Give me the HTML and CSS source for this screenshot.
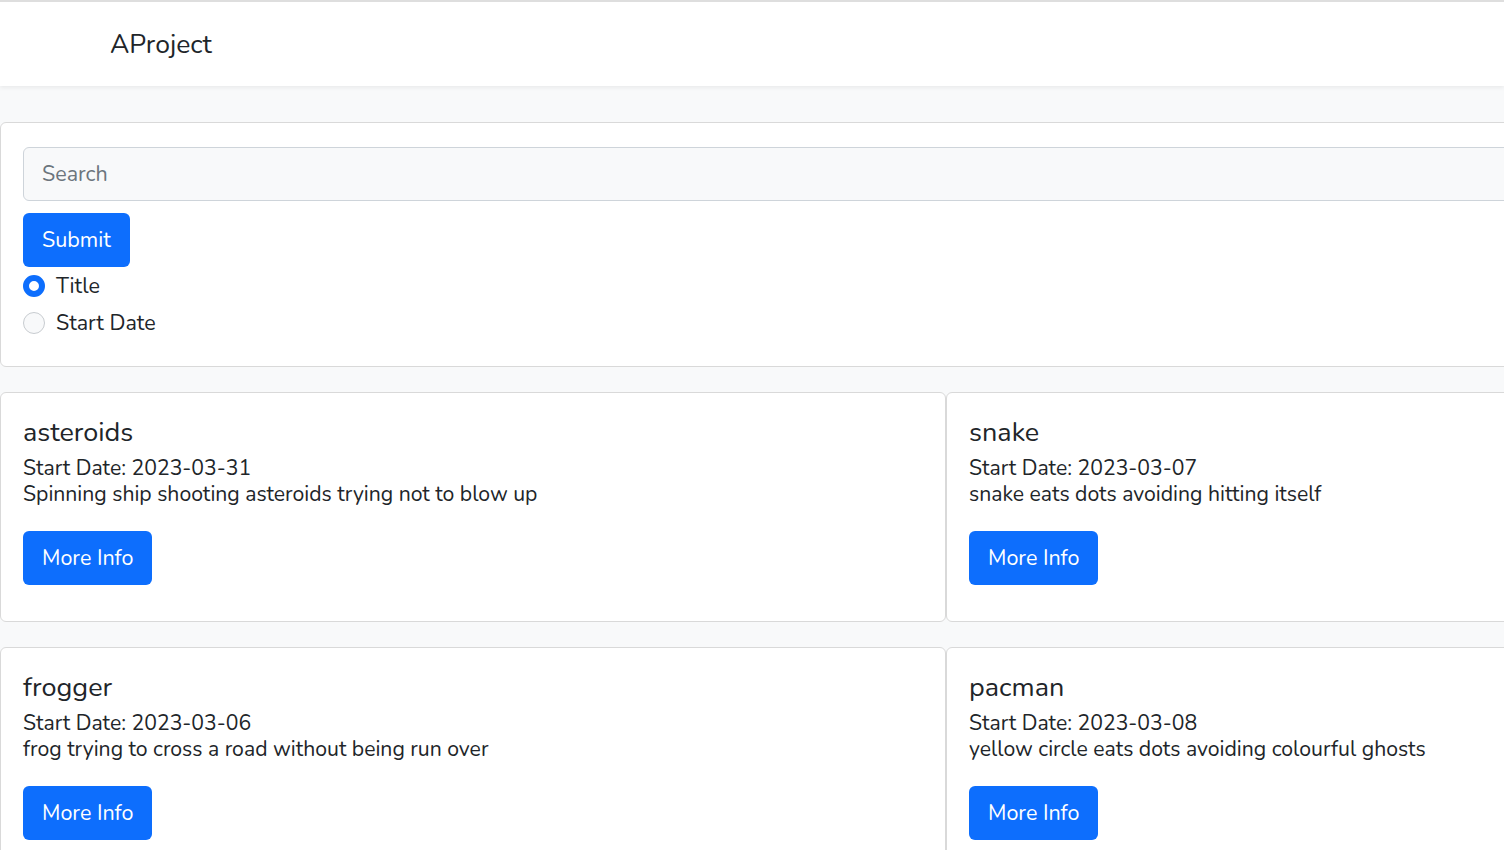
FILE: index.html
```html
<!DOCTYPE html>
<html lang="en">
<head>
<meta charset="utf-8">
<title>AProject</title>
<link rel="stylesheet" href="styles.css">
</head>
<body>
<header class="navbar">
  <a class="brand" href="#">AProject</a>
</header>
<main class="main">
  <section class="search-card">
    <input class="search-input" type="text" placeholder="Search">
    <button class="btn" type="button">Submit</button>
    <label class="radio-row"><span class="radio checked"></span><span>Title</span></label>
    <label class="radio-row"><span class="radio"></span><span>Start Date</span></label>
  </section>
  <section class="grid">
    <article class="card">
      <h5 class="card-title">asteroids</h5>
      <p class="card-text">Start Date: 2023-03-31</p>
      <p class="card-text">Spinning ship shooting asteroids trying not to blow up</p>
      <button class="btn card-btn" type="button">More Info</button>
    </article>
    <article class="card">
      <h5 class="card-title">snake</h5>
      <p class="card-text">Start Date: 2023-03-07</p>
      <p class="card-text">snake eats dots avoiding hitting itself</p>
      <button class="btn card-btn" type="button">More Info</button>
    </article>
    <article class="card">
      <h5 class="card-title">frogger</h5>
      <p class="card-text">Start Date: 2023-03-06</p>
      <p class="card-text">frog trying to cross a road without being run over</p>
      <button class="btn card-btn" type="button">More Info</button>
    </article>
    <article class="card">
      <h5 class="card-title">pacman</h5>
      <p class="card-text">Start Date: 2023-03-08</p>
      <p class="card-text">yellow circle eats dots avoiding colourful ghosts</p>
      <button class="btn card-btn" type="button">More Info</button>
    </article>
  </section>
</main>
</body>
</html>
```

FILE: styles.css
```css
html, body {
  margin: 0;
  padding: 0;
}
body {
  overflow: hidden;
  background: #f8f9fa;
  color: #212529;
  font-family: "Nunito", Lato, "Open Sans", sans-serif;
  font-size: 21.5px;
  border-top: 2px solid #dedede;
}
.navbar {
  height: 84px;
  background: #ffffff;
  box-shadow: 0 2px 4px rgba(0, 0, 0, 0.06);
  display: flex;
  align-items: center;
  padding-left: 110px;
  position: relative;
}
.brand {
  color: #212529;
  text-decoration: none;
  font-size: 26.5px;
  line-height: 30px;
  margin-bottom: 1px;
}
.main {
  padding-top: 36px;
  width: 1892px;
}
.search-card {
  background: #ffffff;
  border: 1px solid #d9d9d9;
  border-radius: 6px;
  padding: 24px 22px 25px;
  display: flex;
  flex-direction: column;
  align-items: flex-start;
}
.search-input {
  box-sizing: border-box;
  width: 100%;
  height: 54px;
  border: 1px solid #ced4da;
  border-radius: 6px;
  background: #f8f9fa;
  padding: 0 18px;
  font: inherit;
  color: #212529;
  outline: none;
}
.search-input::placeholder {
  color: #6c757d;
}
.btn {
  box-sizing: border-box;
  height: 54px;
  margin-top: 12px;
  padding: 0 19px;
  border: 0;
  border-radius: 6px;
  background: #0d6efd;
  color: #ffffff;
  font: inherit;
  font-size: 21.5px;
  cursor: pointer;
}
.radio-row {
  display: flex;
  align-items: center;
  gap: 11px;
  height: 37px;
}
.radio {
  box-sizing: border-box;
  width: 22px;
  height: 22px;
  border-radius: 50%;
  border: 1px solid #c8ccd0;
  background: #f8f9fa;
}
.radio.checked {
  border: 6px solid #0d6efd;
  background: #ffffff;
}
.grid {
  margin-top: 25px;
  display: grid;
  grid-template-columns: 946px 946px;
  row-gap: 25px;
}
.card {
  background: #ffffff;
  border: 1px solid #d9d9d9;
  border-radius: 6px;
  padding: 25px 22px 36px;
  display: flex;
  flex-direction: column;
  align-items: flex-start;
}
.card-title {
  margin: 0 0 7px;
  font-size: 27px;
  font-weight: 400;
  line-height: 30px;
}
.card-text {
  margin: 0;
  font-size: 21.2px;
  line-height: 26px;
}
.card-btn {
  margin-top: 24px;
}
```
